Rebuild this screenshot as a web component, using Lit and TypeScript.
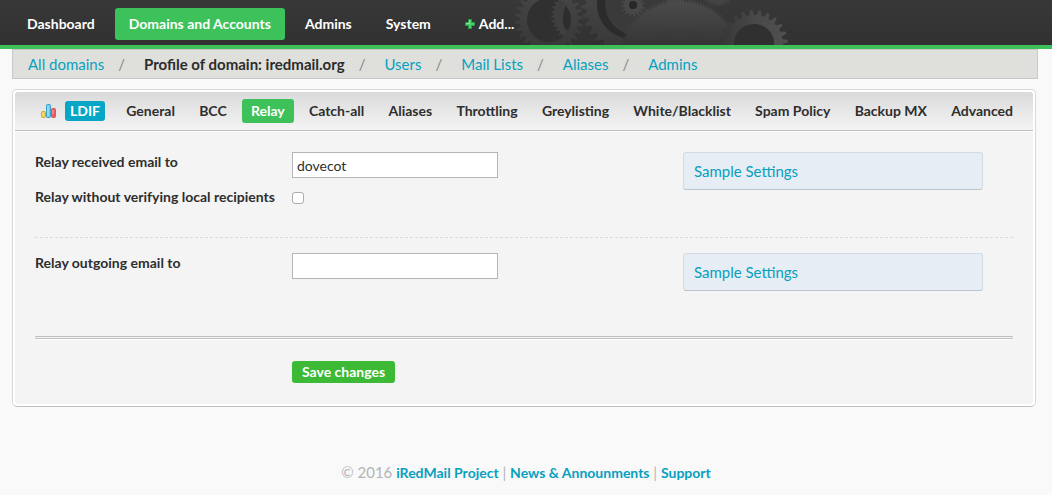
import { LitElement, html, svg, css } from "lit";
import { customElement, property, state } from "lit/decorators.js";
import { classMap } from "lit/directives/class-map.js";

/** Outline of a cog: alternates between the root and tip radius once per tooth. */
function cog(cx: number, cy: number, root: number, tip: number, teeth: number, hole = 0): string {
  const step = (Math.PI * 2) / teeth;
  const at = (r: number, a: number) =>
    `${(cx + r * Math.cos(a)).toFixed(2)} ${(cy + r * Math.sin(a)).toFixed(2)}`;
  const points: string[] = [];
  for (let i = 0; i < teeth; i++) {
    const a = i * step;
    points.push(at(root, a), at(root, a + step * 0.35), at(tip, a + step * 0.55), at(tip, a + step * 0.8));
  }
  let d = `M${points.join("L")}Z`;
  if (hole) {
    d += `M${cx - hole} ${cy}a${hole} ${hole} 0 1 0 ${hole * 2} 0a${hole} ${hole} 0 1 0 ${-hole * 2} 0Z`;
  }
  return d;
}

@customElement("cog-artwork")
class CogArtwork extends LitElement {
  static styles = css`
    :host { display: block; width: 280px; height: 45px; }
    .art { display: block; }
  `;

  render() {
    return html`<svg class="art" width="280" height="45" viewBox="512 0 280 45" aria-hidden="true">
      ${svg`
        <defs>
          <linearGradient id="disc" x1="0" y1="0" x2="0" y2="45" gradientUnits="userSpaceOnUse">
            <stop offset="0" stop-color="#4c4c4c" /><stop offset="1" stop-color="#353535" />
          </linearGradient>
          <linearGradient id="ring" x1="0" y1="0" x2="0" y2="45" gradientUnits="userSpaceOnUse">
            <stop offset="0" stop-color="#444" /><stop offset="1" stop-color="#393939" />
          </linearGradient>
          <linearGradient id="right" x1="720" y1="0" x2="788" y2="0" gradientUnits="userSpaceOnUse">
            <stop offset="0" stop-color="#363636" /><stop offset=".5" stop-color="#484848" /><stop offset="1" stop-color="#505050" />
          </linearGradient>
          <clipPath id="opening"><circle cx="549" cy="20" r="22" /></clipPath>
        </defs>
        <path d=${cog(632, 4, 46, 51, 34, 35)} fill="url(#ring)" fill-rule="evenodd" />
        <circle cx="632" cy="4" r="35" fill="#2b2b2b" />
        <circle cx="636" cy="4" r="31" fill="#3a3a3a" />
        <path d=${cog(549, 20, 29, 34, 28, 22)} fill="url(#ring)" fill-rule="evenodd" />
        <g clip-path="url(#opening)">
          <circle cx="549" cy="20" r="22" fill="#303030" />
          <path d=${cog(580, 15, 26, 29, 36)} fill="#3f3f3f" />
          <ellipse cx="567" cy="18" rx="4" ry="12" fill="#2d2d2d" />
        </g>
        <path d=${cog(718, -10, 14, 17, 36)} fill="#444" />
        <path d=${cog(633, 5, 9, 12, 16, 4)} fill="#484848" fill-rule="evenodd" />
        <circle cx="633" cy="5" r="4" fill="#272727" />
        <path d=${cog(680, 61, 59, 62, 130)} fill="url(#disc)" />
        <circle cx="680" cy="59" r="30" fill="none" stroke="#353535" stroke-dasharray="1 2" />
        <path d=${cog(754, 44, 29, 34, 24, 20)} fill="url(#right)" fill-rule="evenodd" />
        <circle cx="754" cy="44" r="20" fill="#303030" />
      `}
    </svg>`;
  }
}

@customElement("site-header")
class SiteHeader extends LitElement {
  @state() private active = "Domains and Accounts";
  private items = ["Dashboard", "Domains and Accounts", "Admins", "System"];

  static styles = css`
    :host {
      display: grid;
      box-sizing: border-box;
      height: 49px;
      border-bottom: 4px solid #3dc15b;
      background: linear-gradient(#383838, #313131);
    }
    .art { grid-area: 1 / 1; justify-self: center; margin-left: 252px; }
    .nav {
      grid-area: 1 / 1;
      z-index: 1;
      display: flex;
      align-items: center;
      gap: 6px;
      padding: 3px 13px 0;
    }
    .item {
      display: flex;
      align-items: center;
      gap: 4px;
      padding: 0 14px;
      line-height: 32px;
      border-radius: 3px;
      color: #fff;
      font-weight: 700;
      text-decoration: none;
      white-space: nowrap;
    }
    .active { background: #3dc15b; }
  `;

  render() {
    return html`
      <cog-artwork class="art"></cog-artwork>
      <nav class="nav">
        ${this.items.map(
          (label) => html`<a
            href="#"
            class=${classMap({ item: true, active: label === this.active })}
            @click=${() => (this.active = label)}
            >${label}</a>`
        )}
        <a href="#" class="item">
          <svg width="10" height="10" viewBox="0 0 10 10" aria-hidden="true">
            <path d="M3.5.5h3v3h3v3h-3v3h-3v-3h-3v-3h3z" fill="#46cf6a" stroke="#2aa34a" stroke-width=".8" />
            <path d="M4.5 1.5v3h-3" fill="none" stroke="#8ceca2" />
          </svg>
          Add...
        </a>
      </nav>`;
  }
}

@customElement("crumb-bar")
class CrumbBar extends LitElement {
  private crumbs = ["All domains", "Profile of domain: iredmail.org", "Users", "Mail Lists", "Aliases", "Admins"];

  static styles = css`
    :host {
      display: block;
      margin: 0 14px 0 12px;
      border: 1px solid #c8c8c8;
      background: #dfe0db;
    }
    .list {
      display: flex;
      margin: 0;
      padding: 0 15px;
      list-style: none;
      font-size: 15px;
      line-height: 28px;
      white-space: nowrap;
    }
    .crumb + .crumb::before { content: "/"; margin: 0 19px 0 14px; color: #888; }
    .link { color: #07a0c0; text-decoration: none; }
    .current { color: #2c2c2c; font-weight: 700; text-decoration: none; }
  `;

  render() {
    return html`<ul class="list">
      ${this.crumbs.map(
        (c, i) => html`<li class="crumb"><a href="#" class=${i === 1 ? "current" : "link"}>${c}</a></li>`
      )}
    </ul>`;
  }
}

@customElement("profile-tabs")
class ProfileTabs extends LitElement {
  @state() private active = "Relay";
  private tabs = [
    "General", "BCC", "Relay", "Catch-all", "Aliases", "Throttling", "Greylisting",
    "White/Blacklist", "Spam Policy", "Backup MX", "Advanced",
  ];

  static styles = css`
    :host {
      display: flex;
      align-items: center;
      justify-content: space-between;
      height: 38px;
      padding: 0 11px 0 26px;
      border-bottom: 1px solid #c0c0c0;
      box-shadow: 0 1px #fff;
      border-radius: 3px 3px 0 0;
      background: linear-gradient(#dadada, #f4f4f4);
      white-space: nowrap;
    }
    .lead { display: flex; align-items: center; gap: 9px; margin-right: 6px; }
    .ldif {
      padding: 0 5px;
      line-height: 20px;
      border-radius: 3px;
      background: #07a5c6;
      color: #fff;
      font-weight: 700;
      text-decoration: none;
    }
    .tab {
      padding: 0 9px;
      line-height: 24px;
      border-radius: 3px;
      color: #2e2e2e;
      font-weight: 700;
      text-decoration: none;
    }
    .active { background: #3dc15b; color: #fff; }
  `;

  render() {
    return html`
      <span class="lead">
        <svg width="15" height="15" viewBox="0 0 15 15" aria-hidden="true">
          <rect x=".5" y="7.5" width="4" height="6" rx="1" fill="#f8cf4b" stroke="#d9a02c" />
          <rect x="5.5" y=".5" width="4" height="13" rx="1" fill="#69cdf0" stroke="#3a9fc9" />
          <rect x="10.5" y="4.5" width="4" height="9" rx="1" fill="#ee5b62" stroke="#d8595f" />
          <path d="M2 9v3M7 2v10M12 6v4" stroke="#fff" stroke-opacity=".5" />
        </svg>
        <a href="#" class="ldif">LDIF</a>
      </span>
      ${this.tabs.map(
        (t) => html`<a
          href="#"
          class=${classMap({ tab: true, active: t === this.active })}
          @click=${() => (this.active = t)}
          >${t}</a>`
      )}`;
  }
}

@customElement("relay-form")
class RelayForm extends LitElement {
  @property() incoming = "dovecot";
  @property() outgoing = "";

  static styles = css`
    :host { display: block; padding: 21px 20px 21px; }
    .section {
      display: grid;
      grid-template-columns: 257px 1fr 300px;
      padding-right: 30px;
      align-items: start;
      row-gap: 9px;
    }
    .first { padding-bottom: 30px; margin-bottom: 15px; border-bottom: 1px dashed #dcdcdc; }
    .second { min-height: 83px; }
    .label { color: #2e2e2e; font-weight: 700; line-height: 20px; white-space: nowrap; }
    .text {
      box-sizing: border-box;
      width: 206px;
      height: 26px;
      padding: 0 4px;
      border: 1px solid #b5b5b5;
      border-radius: 0;
      background: #fff;
      color: #2e2e2e;
      font: inherit;
    }
    .check {
      appearance: none;
      box-sizing: border-box;
      width: 12px;
      height: 12px;
      margin: 5px 0 0;
      border: 1px solid #acacac;
      border-radius: 3px;
      background: #fff;
    }
    .check:checked { background: #3dc15b; }
    .note {
      grid-column: 3;
      padding: 0 10px;
      font-size: 15px;
      line-height: 36px;
      border: 1px solid #d2dbe3;
      border-bottom-color: #bcc5cc;
      border-radius: 3px;
      background: #e6edf4;
    }
    .tall { grid-row: 1 / span 2; }
    .link { color: #07a0c0; text-decoration: none; }
    .actions {
      padding: 22px 0 0 257px;
      border-top: 3px double #c0c0c0;
      box-shadow: inset 0 1px #fff;
    }
    .save {
      display: block;
      padding: 0 10px;
      border: 0;
      border-radius: 3px;
      background: #3cb935;
      color: #fff;
      font: inherit;
      font-weight: 700;
      line-height: 22px;
      white-space: nowrap;
    }
  `;

  render() {
    return html`<form @submit=${(e: Event) => e.preventDefault()}>
      <div class="section first">
        <label class="label" for="incoming">Relay received email to</label>
        <input class="text" id="incoming" type="text" .value=${this.incoming} />
        <div class="note tall"><a class="link" href="#">Sample Settings</a></div>
        <label class="label" for="unverified">Relay without verifying local recipients</label>
        <input class="check" id="unverified" type="checkbox" />
      </div>
      <div class="section second">
        <label class="label" for="outgoing">Relay outgoing email to</label>
        <input class="text" id="outgoing" type="text" .value=${this.outgoing} />
        <div class="note"><a class="link" href="#">Sample Settings</a></div>
      </div>
      <div class="actions"><button class="save" type="submit">Save changes</button></div>
    </form>`;
  }
}

@customElement("app-root")
class AppRoot extends LitElement {
  static styles = css`
    :host {
      display: block;
      min-height: 100vh;
      background: #f9f9f9;
      color: #2e2e2e;
      font: 14px/20px Lato, "Open Sans", sans-serif;
    }
    .panel {
      margin: 10px 16px 0 12px;
      padding: 2px;
      border: 1px solid #d8d8d8;
      border-bottom-color: #c0c0c0;
      border-radius: 5px;
      background: #fff;
    }
    .inner { border-radius: 3px; background: #f4f4f4; }
    .footer { padding: 55px 0 13px; text-align: center; font-size: 15px; color: #b4b4b4; }
    .link { color: #07a0c0; font-size: 14px; font-weight: 700; text-decoration: none; }
  `;

  render() {
    return html`
      <site-header></site-header>
      <crumb-bar></crumb-bar>
      <main class="panel">
        <div class="inner">
          <profile-tabs></profile-tabs>
          <relay-form></relay-form>
        </div>
      </main>
      <footer class="footer">
        © 2016 <a class="link" href="#">iRedMail Project</a> |
        <a class="link" href="#">News &amp; Announments</a> |
        <a class="link" href="#">Support</a>
      </footer>`;
  }
}
